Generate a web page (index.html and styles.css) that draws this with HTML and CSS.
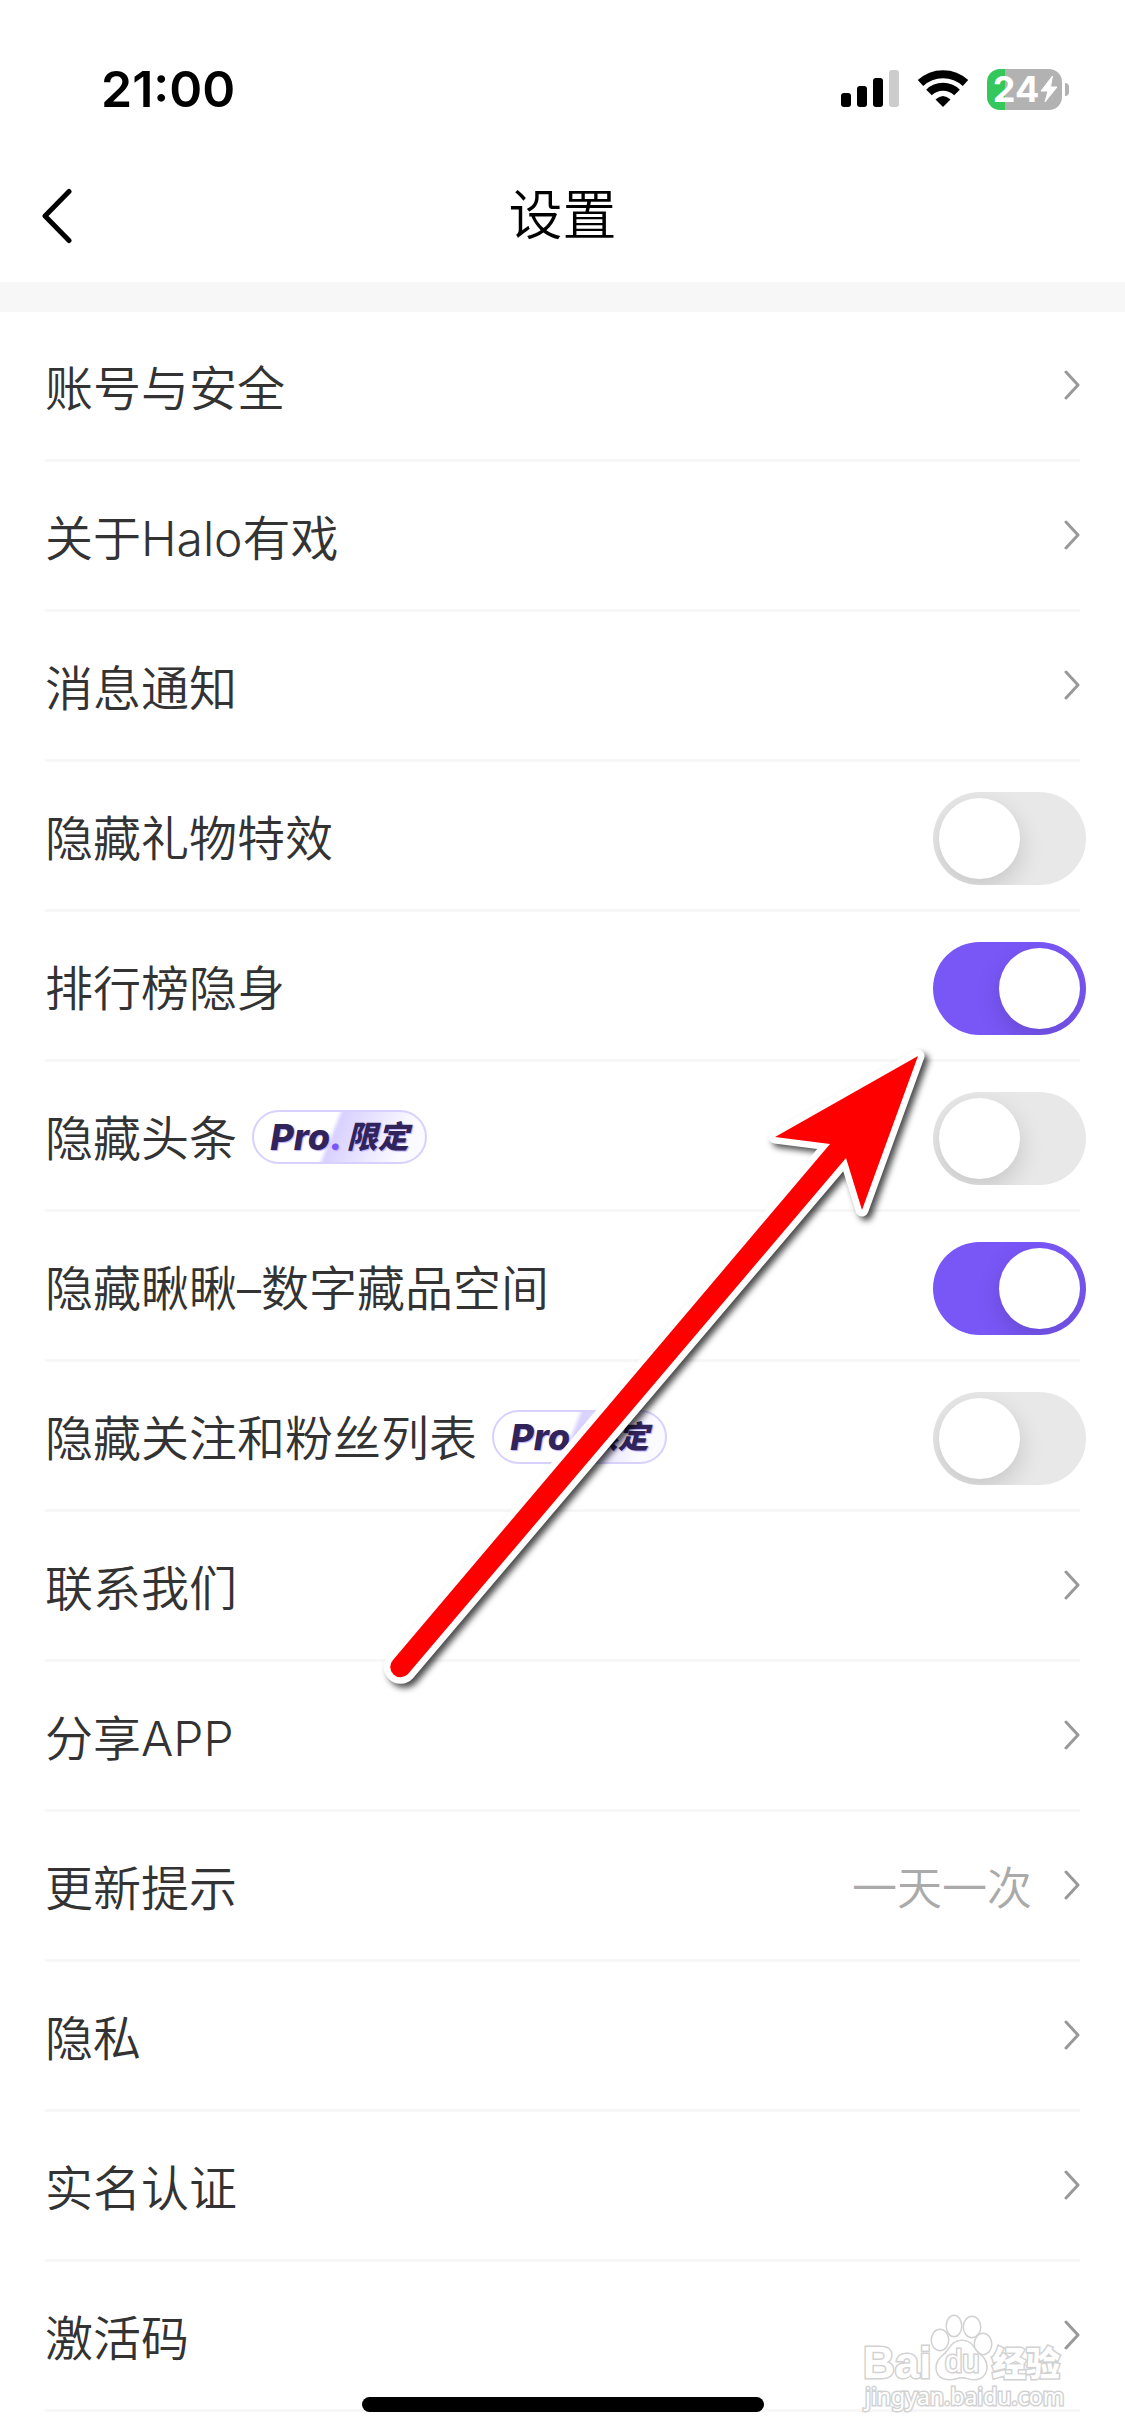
FILE: index.html
```html
<!DOCTYPE html>
<html lang="zh-CN">
	<head>
		<meta charset="utf-8">
		<meta name="viewport" content="width=device-width, initial-scale=1">
		<title>设置</title>
		<link rel="stylesheet" href="styles.css">
	</head>
	<body>
		<svg class="defs" width="0" height="0" aria-hidden="true">
			<symbol id="chevron" viewBox="0 0 16 30">
				<path d="M2 2 L14 15 L2 28" fill="none" stroke="#999" stroke-width="3" stroke-linecap="round" stroke-linejoin="round"/>
			</symbol>
		</svg>
		<div class="status">
			<span class="time">21:00</span>
			<div class="status-icons">
				<svg width="58" height="38" viewBox="0 0 58 38">
					<rect x="0" y="23" width="10" height="14" rx="3"/>
					<rect x="16" y="16" width="10" height="21" rx="3"/>
					<rect x="32" y="8" width="10" height="29" rx="3"/>
					<rect x="48" y="0" width="10" height="37" rx="3" fill="#ccc"/>
				</svg>
				<svg width="52" height="38" viewBox="0 0 52 38">
					<g fill="none" stroke="#000" stroke-width="8">
						<path d="M3.500 13 A33 33 0 0 1 48.500 13"/>
						<path d="M12 22.500 A20 20 0 0 1 40 22.500"/>
					</g>
					<path d="M18.500 29.500 Q26 22.500 33.500 29.500 L26 37 Z"/>
				</svg>
				<div class="battery">
					<span>24</span>
					<svg width="18" height="28" viewBox="0 0 18 28">
						<path d="M12.500 1 L1 16 H8 L5 27 L17 12 H10.500 Z" fill="#fff" stroke="#fff" stroke-linejoin="round"/>
					</svg>
				</div>
			</div>
		</div>
		<header class="nav">
			<button class="back" aria-label="返回">
				<svg width="32" height="56" viewBox="0 0 32 56">
					<path d="M28 3.500 L4 28 L28 52.500" fill="none" stroke="#000" stroke-width="5" stroke-linecap="round" stroke-linejoin="round"/>
				</svg>
			</button>
			<h1>设置</h1>
		</header>
		<main class="list">
			<a class="row" href="#">账号与安全<svg class="arrow"><use href="#chevron"/></svg></a>
			<a class="row" href="#">关于Halo有戏<svg class="arrow"><use href="#chevron"/></svg></a>
			<a class="row" href="#">消息通知<svg class="arrow"><use href="#chevron"/></svg></a>
			<label class="row">隐藏礼物特效<input class="switch" type="checkbox"></label>
			<label class="row">排行榜隐身<input class="switch" type="checkbox" checked></label>
			<label class="row">隐藏头条<span class="pro"><b>Pro<i>.</i></b>限定</span><input class="switch" type="checkbox"></label>
			<label class="row">隐藏瞅瞅–数字藏品空间<input class="switch" type="checkbox" checked></label>
			<label class="row">隐藏关注和粉丝列表<span class="pro"><b>Pro<i>.</i></b>限定</span><input class="switch" type="checkbox"></label>
			<a class="row" href="#">联系我们<svg class="arrow"><use href="#chevron"/></svg></a>
			<a class="row" href="#">分享APP<svg class="arrow"><use href="#chevron"/></svg></a>
			<a class="row" href="#">更新提示<span class="value">一天一次</span><svg class="arrow"><use href="#chevron"/></svg></a>
			<a class="row" href="#">隐私<svg class="arrow"><use href="#chevron"/></svg></a>
			<a class="row" href="#">实名认证<svg class="arrow"><use href="#chevron"/></svg></a>
			<a class="row" href="#">激活码<svg class="arrow"><use href="#chevron"/></svg></a>
		</main>
		<div class="home-bar"></div>
		<svg class="pointer" width="570" height="670" viewBox="370 1030 570 670" aria-hidden="true">
			<path d="M918 1056 L775 1137 L830 1144 L393 1660 A10 10 0 0 0 408 1674 L846 1158 L862 1210 Z" fill="#f00" stroke="#fff" stroke-width="13" stroke-linejoin="round" paint-order="stroke"/>
		</svg>
		<svg class="watermark" width="206" height="106" viewBox="0 0 206 106">
			<g class="outline">
				<text class="wm-bai" x="2" y="68">Bai</text>
				<ellipse cx="79" cy="30" rx="8" ry="10"/>
				<ellipse cx="93" cy="16" rx="7" ry="10"/>
				<ellipse cx="111" cy="17" rx="8" ry="10"/>
				<ellipse cx="122" cy="34" rx="8" ry="10"/>
				<path d="M101 31 C112 31 112 40 119 45 C129 53 127 69 113 69 C107 69 106 67 101 67 C96 67 94 69 88 69 C74 69 72 54 82 46 C89 41 90 31 101 31 Z"/>
				<text class="wm-du" x="84" y="62">du</text>
				<text class="wm-cn" x="131" y="66">经验</text>
				<text class="wm-url" x="4" y="95">jingyan.baidu.com</text>
			</g>
		</svg>
	</body>
</html>
```
FILE: styles.css
```css
*{
	box-sizing: border-box;
}
body{
	position: relative;
	margin: 0;
	min-height: 100vh;
	background: #fff;
	color: #333;
	font-family: Inter, "Noto Sans CJK SC", sans-serif;
	font-weight: 350;
}
.defs{
	position: absolute;
}
.status{
	display: flex;
	align-items: center;
	justify-content: space-between;
	height: 150px;
	padding: 28px 63px 0 101px;
	color: #000;
}
.time{
	font-size: 50px;
	font-weight: 600;
}
.status-icons{
	display: flex;
	align-items: center;
	gap: 18px;
}
.battery{
	position: relative;
	display: flex;
	align-items: center;
	justify-content: center;
	gap: 1px;
	width: 75px;
	height: 41px;
	padding-left: 2px;
	border-radius: 13px;
	background: linear-gradient(to right, #34c759 18px, #b2b2b2 18px);
	color: #fff;
	font-size: 36px;
	font-weight: 700;
	line-height: 41px;
}
.battery::after{
	content: "";
	position: absolute;
	right: -7px;
	top: 14px;
	width: 4px;
	height: 13px;
	border-radius: 0 4px 4px 0;
	background: #b2b2b2;
}
.nav{
	display: grid;
	grid-template-columns: 1fr auto 1fr;
	align-items: center;
	height: 132px;
	padding: 0 41px;
	color: #000;
}
.nav h1{
	margin: 0;
	font-size: 54px;
	font-weight: 350;
	line-height: 80px;
}
.back{
	justify-self: start;
	display: flex;
	padding: 0;
	border: 0;
	background: none;
}
.list{
	border-top: 30px solid #f7f7f7;
}
.row{
	display: flex;
	align-items: center;
	height: 150px;
	margin: 0 45px;
	padding-bottom: 4px;
	box-shadow: inset 0 -3px #f7f7f7;
	color: #333;
	font-size: 48px;
	text-decoration: none;
	white-space: nowrap;
}
.arrow{
	width: 16px;
	height: 30px;
	margin-left: auto;
}
.value{
	margin-left: auto;
	color: #aaa;
	font-size: 45px;
}
.value + .arrow{
	margin-left: 32px;
}
.switch{
	appearance: none;
	width: 153px;
	height: 93px;
	margin: 7px -6px 0 auto;
	padding: 6px;
	border-radius: 47px;
	background: #e8e8e8;
	overflow: hidden;
}
.switch::before{
	content: "";
	display: block;
	width: 81px;
	height: 81px;
	border-radius: 50%;
	background: #fff;
	box-shadow: 0 9px 24px rgba(0,0,0,0.15);
}
.switch:checked{
	background: #7957f7;
}
.switch:checked::before{
	margin-left: auto;
}
.pro{
	display: flex;
	align-items: center;
	justify-content: center;
	gap: 4px;
	width: 175px;
	height: 54px;
	margin: 4px 0 0 15px;
	border: 2px solid #d8d0ff;
	border-radius: 27px;
	background: linear-gradient(112deg, #fff 44%, #d9d1ff 47%, #fbfaff 85%);
	color: #30245a;
	font-size: 31px;
	font-style: italic;
	font-weight: 900;
	line-height: 50px;
	text-shadow: 1px 1px 1px #b9adff;
}
.pro b{
	font-size: 36px;
	font-weight: 800;
}
.pro i{
	color: #7957f7;
}
.home-bar{
	position: absolute;
	left: 50%;
	bottom: 24px;
	width: 402px;
	height: 15px;
	border-radius: 8px;
	background: #000;
	transform: translateX(-50%);
}
.pointer{
	position: absolute;
	left: 370px;
	top: 1030px;
	pointer-events: none;
	filter: drop-shadow(4px 4px 3px rgba(0,0,0,0.7));
}
.watermark{
	position: absolute;
	right: 58px;
	bottom: 20px;
	pointer-events: none;
}
.outline{
	fill: #fff;
	stroke: #d2d2d2;
	stroke-width: 3px;
	paint-order: stroke;
}
.wm-bai{
	font: bold 44px "Liberation Sans", sans-serif;
}
.wm-du{
	font: 31px "Liberation Sans", sans-serif;
}
.wm-cn{
	font: 900 34px "Noto Sans CJK SC", sans-serif;
}
.wm-url{
	font: 23px "Noto Sans", sans-serif;
}
```
